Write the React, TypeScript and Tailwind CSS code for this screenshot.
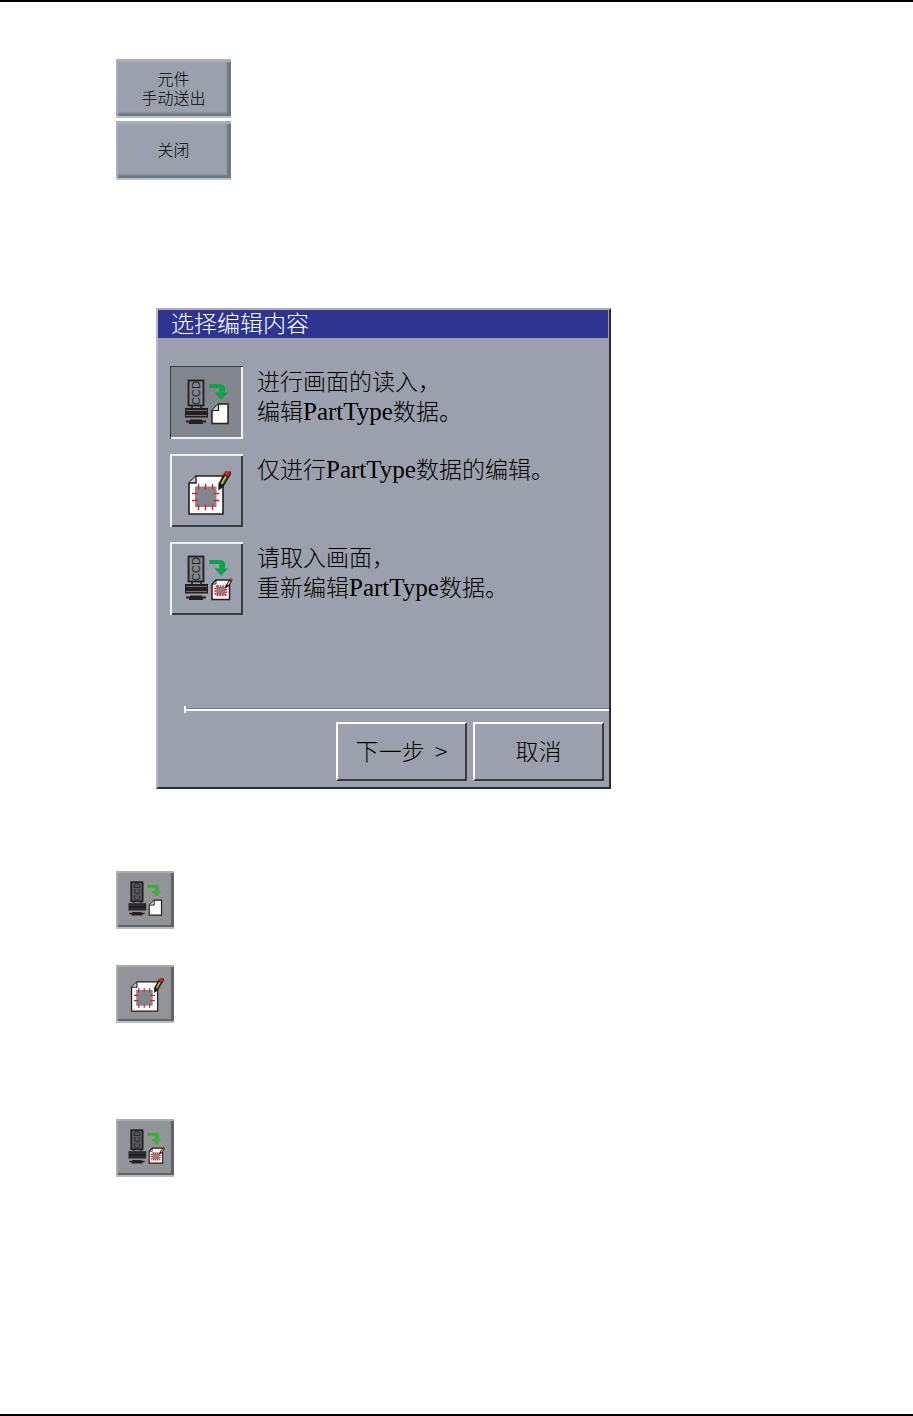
import { useState } from 'react'
import type { ReactNode } from 'react'
import clsx from 'clsx'

type Option = {
  key: string
  icon: ReactNode
  lines: ReactNode[]
}

function CameraShape({ small }: { small?: boolean }) {
  return (
    <g>
      <rect
        x="18.5"
        y="14.5"
        width="15"
        height="25"
        fill={small ? '#55585b' : '#80868c'}
        stroke="#231f20"
        strokeWidth={small ? 2.2 : 1.8}
      />
      <text
        transform="translate(30 39) rotate(-90)"
        fontFamily="Liberation Sans, sans-serif"
        fontSize="11"
        fill="#231f20"
      >
        CCD
      </text>
      <path d="M22 40v2M31 40v2" stroke="#231f20" strokeWidth="1.6" />
      <rect x="15" y="42" width="23" height="9.5" fill="#231f20" />
      <path d="M16 44.5h21M16 49.5h21" stroke="#80868c" strokeWidth={small ? 0.4 : 0.8} />
      <path d="M16 54.5h4v-1h12v1h4v2h-3v1.5H19v-1.5h-3z" fill="#231f20" />
      <path
        d="M39.3 18H50q5 0 5 5v3.5h3.4L51 33.4l-6.4-6.9h4.7V22h-10z"
        fill={small ? '#3fae3c' : '#0ca44a'}
      />
    </g>
  )
}

function CameraToPageIcon({ small }: { small?: boolean }) {
  return (
    <svg viewBox="0 0 73 73" className="size-full" aria-hidden="true">
      <CameraShape small={small} />
      <path d="M48.5 38H58v19.5H42V44.5z" fill="#fff" stroke="#231f20" strokeWidth="1.5" />
      <path d="M48.5 38v6.5H42" fill="#c9ccd2" stroke="#231f20" strokeWidth="1.2" />
    </svg>
  )
}

function EditPartIcon() {
  return (
    <svg viewBox="0 0 73 73" className="size-full" aria-hidden="true">
      <path d="M26 22h27v38H19V29z" fill="#fff" stroke="#231f20" strokeWidth="1.6" />
      <path d="M26 22v7h-7" fill="#c9ccd2" stroke="#231f20" strokeWidth="1.4" />
      <rect x="25" y="32.5" width="21.5" height="20.5" fill="#80868c" />
      <path
        d="M28.5 30v5.5M35.5 30v5.5M42.5 30v5.5M28.5 50.5V56M35.5 50.5V56M42.5 50.5V56M22 39.5h6M22 46.5h6M43.5 39.5h6M43.5 46.5h6"
        stroke="#ed1c24"
        strokeWidth="1.5"
      />
      <path d="M48.3 36.5v-6.8L54 19.5l5.5 3-6 10.5z" fill="#231f20" />
      <path d="M50.8 29.5l4.2-7.5 2 1.2-4.2 7.3z" fill="#d8cf3a" />
      <path d="M52 31l4.8-8.2" stroke="#231f20" strokeWidth="0.6" />
      <path d="M53.5 19.3l2-2.5 4.7.4.3 2.6-2 3z" fill="#d2232a" />
      <path d="M60.3 17.5v3l-2 3" fill="none" stroke="#231f20" strokeWidth="1.3" />
    </svg>
  )
}

function CameraToPartIcon({ small }: { small?: boolean }) {
  return (
    <svg viewBox="0 0 73 73" className="size-full" aria-hidden="true">
      <CameraShape small={small} />
      <path d="M46 38h13.5v19.5H42V42z" fill="#fff" stroke="#231f20" strokeWidth="1.5" />
      <path d="M46 38v4h-4" fill="none" stroke="#231f20" strokeWidth="1" />
      <rect x="46.5" y="45" width="8.5" height="7.5" fill="#80868c" />
      <rect
        x="45.5"
        y="44.5"
        width="10.5"
        height="8.5"
        rx="1.5"
        fill="none"
        stroke="#ed1c24"
        strokeWidth="2.4"
        strokeDasharray="1.6 1"
      />
      <path d="M55 46.5l1-4 3.6-5 2.6 1.7-3.7 5.3z" fill="#231f20" />
      <path d="M57 42.5l2.5-3.4 1.2.8-2.5 3.3z" fill="#e3c42c" />
      <path d="M59.3 37.4l1.5-1.6 2 1.4-1 1.8z" fill="#d2232a" />
    </svg>
  )
}

function Latin({ children }: { children: ReactNode }) {
  return <span className="font-['Liberation_Serif',serif] text-[25px]">{children}</span>
}

const options: Option[] = [
  {
    key: 'read',
    icon: <CameraToPageIcon />,
    lines: ['进行画面的读入，', <>编辑<Latin>PartType</Latin>数据。</>],
  },
  {
    key: 'edit',
    icon: <EditPartIcon />,
    lines: [<>仅进行<Latin>PartType</Latin>数据的编辑。</>],
  },
  {
    key: 'reread',
    icon: <CameraToPartIcon />,
    lines: ['请取入画面，', <>重新编辑<Latin>PartType</Latin>数据。</>],
  },
]

function PanelButton({ children }: { children: ReactNode }) {
  return (
    <button
      type="button"
      className="h-[59px] w-[115px] border-b-2 border-[#bcc2cc] bg-[#9aa0ac] text-base leading-[19px] font-light text-black shadow-[inset_2px_3px_1px_#aab1bb,inset_-4px_-3px_2px_#6c777e]"
    >
      {children}
    </button>
  )
}

function SmallIconButton({ label, children }: { label: string; children: ReactNode }) {
  return (
    <button
      type="button"
      aria-label={label}
      className="block size-[58px] border-b-2 border-[#b9bbc2] bg-[#939498] shadow-[inset_2px_2px_1px_#acadb1,inset_-3px_-2px_1px_#5f6266]"
    >
      {children}
    </button>
  )
}

function DialogButton({ children }: { children: ReactNode }) {
  return (
    <button
      type="button"
      className="h-[59px] w-[131px] border-2 border-t-white border-r-[#3a3b3f] border-b-[#3a3b3f] border-l-white pb-1"
    >
      {children}
    </button>
  )
}

function EditDialog() {
  const [selected, setSelected] = useState('read')

  return (
    <section
      aria-labelledby="dialog-title"
      className="w-[455px] max-w-full border-2 border-t-[#a9aeb9] border-r-[#2b2b30] border-b-[#2b2b30] border-l-[#b4b9c3] bg-[#9aa0ac] text-[23px] leading-[28px] font-light text-black"
    >
      <h2
        id="dialog-title"
        className="mr-px bg-[#2e3490] pb-1 pl-[13px] text-[23px] leading-[24px] font-light text-white"
      >
        选择编辑内容
      </h2>

      <ul className="space-y-[15px] px-3 pt-7">
        {options.map((option) => (
          <li key={option.key} className="flex items-start gap-[14px]">
            <button
              type="button"
              aria-pressed={selected === option.key}
              aria-labelledby={`option-${option.key}`}
              onClick={() => setSelected(option.key)}
              className={clsx(
                'size-[73px] shrink-0',
                selected === option.key
                  ? 'bg-[#80868c] shadow-[inset_1px_1px_#3a3b3f,inset_-2px_-2px_#eef0f2]'
                  : 'shadow-[inset_2px_2px_#eef0f2,inset_-2px_-2px_#3a3b3f]'
              )}
            >
              {option.icon}
            </button>
            <div id={`option-${option.key}`}>
              {option.lines.map((line, i) => (
                <p key={i} className="h-[30px] whitespace-nowrap">
                  {line}
                </p>
              ))}
            </div>
          </li>
        ))}
      </ul>

      <div className="mt-[91px] ml-[26px] flex items-center">
        <span className="h-[7px] w-0.5 bg-white" />
        <span className="h-[3px] flex-1 border-t border-[#7c828c] bg-white" />
      </div>

      <div className="mt-[9px] flex justify-end gap-[6px] pr-[5px] pb-[6px]">
        <DialogButton>下一步&nbsp; &gt;</DialogButton>
        <DialogButton>取消</DialogButton>
      </div>
    </section>
  )
}

export default function App() {
  return (
    <main
      lang="zh-CN"
      className="min-h-screen border-y-2 border-black bg-white pt-[57px] pl-[116px] font-['Noto_Sans_CJK_SC',sans-serif]"
    >
      <div className="flex flex-col items-start gap-[3px]">
        <PanelButton>
          元件
          <br />
          手动送出
        </PanelButton>
        <PanelButton>关闭</PanelButton>
      </div>

      <div className="mt-32 pl-10">
        <EditDialog />
      </div>

      <div className="mt-[82px]">
        <SmallIconButton label="读入画面">
          <CameraToPageIcon small />
        </SmallIconButton>
      </div>
      <div className="mt-9">
        <SmallIconButton label="编辑数据">
          <EditPartIcon />
        </SmallIconButton>
      </div>
      <div className="mt-24">
        <SmallIconButton label="重新编辑数据">
          <CameraToPartIcon small />
        </SmallIconButton>
      </div>
    </main>
  )
}
